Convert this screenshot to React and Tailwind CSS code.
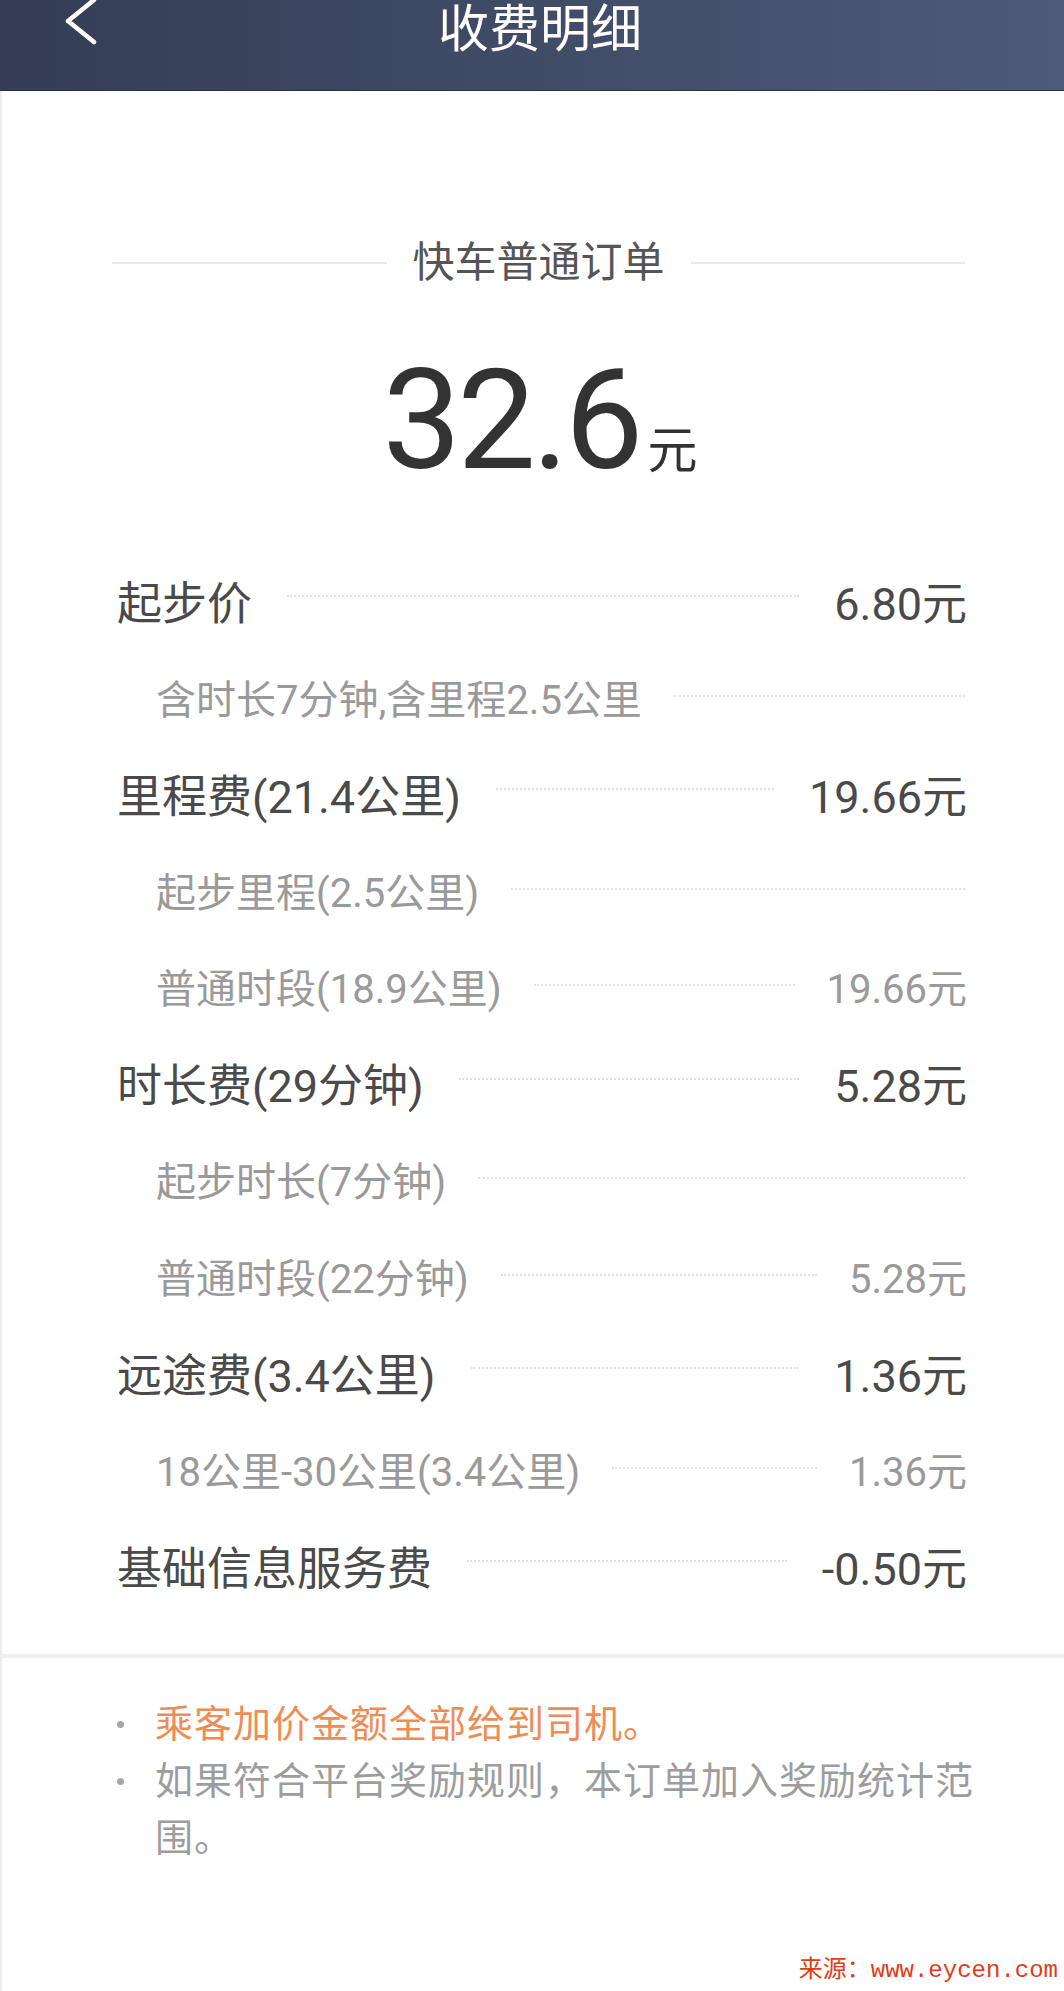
import React from "react";

const rows = [
  { main: true, label: "起步价", value: "6.80元" },
  { main: false, label: "含时长7分钟,含里程2.5公里" },
  { main: true, label: "里程费(21.4公里)", value: "19.66元" },
  { main: false, label: "起步里程(2.5公里)" },
  { main: false, label: "普通时段(18.9公里)", value: "19.66元" },
  { main: true, label: "时长费(29分钟)", value: "5.28元" },
  { main: false, label: "起步时长(7分钟)" },
  { main: false, label: "普通时段(22分钟)", value: "5.28元" },
  { main: true, label: "远途费(3.4公里)", value: "1.36元" },
  { main: false, label: "18公里-30公里(3.4公里)", value: "1.36元" },
  { main: true, label: "基础信息服务费", value: "-0.50元" },
];

const FeeRow = ({ main, label, value }) => {
  if (main) {
    return (
      <div className="flex items-center h-[96.5px] pl-[115px] pr-[97px] text-[45px] leading-none text-[#4a4a4a]">
        <span className="whitespace-nowrap">{label}</span>
        <div className="flex-1 mx-[35px] -translate-y-[8px] border-t-2 border-dotted border-[#e2e2e2]" />
        <span className="whitespace-nowrap">{value}</span>
      </div>
    );
  }
  return (
    <div className="flex items-center h-[96.5px] pl-[154px] pr-[97px] text-[40px] leading-none text-[#9a9a9a]">
      <span className="whitespace-nowrap">{label}</span>
      <div
        className={`flex-1 -translate-y-[5px] border-t-2 border-dotted border-[#e2e2e2] ${
          value ? "mx-[32px]" : "ml-[32px] mr-[2px]"
        }`}
      />
      {value && <span className="whitespace-nowrap">{value}</span>}
    </div>
  );
};

const Note = ({ children, orange }) => (
  <div className="flex items-start">
    <div className="h-[57px] flex items-center">
      <div className="w-[7px] h-[7px] rounded-full bg-[#a5a5a5]" />
    </div>
    <p
      className={`ml-[31px] w-[835px] text-[38px] leading-[57px] tracking-[1px] ${
        orange ? "text-[#ee8c55]" : "text-[#9d9d9d]"
      }`}
    >
      {children}
    </p>
  </div>
);

export default function App() {
  return (
    <div
      className="relative w-[1064px] h-[1991px] overflow-hidden bg-white"
      style={{ fontFamily: 'Roboto, "Noto Sans CJK SC", sans-serif' }}
    >
      {/* Header */}
      <div className="flex items-start h-[91px] bg-gradient-to-r from-[#343d54] to-[#4d5a79] border-b border-[#2c3345]">
        <div className="w-[96px] pl-[63px]">
          <svg width="34" height="46" viewBox="0 0 34 46" className="-mt-[1px]">
            <path d="M31 1 L5 22 L31 43" fill="none" stroke="#ffffff" strokeWidth="4.5" strokeLinecap="round" strokeLinejoin="round" />
          </svg>
        </div>
        <div className="flex-1 pr-[80px] text-center text-white text-[51px] leading-none" style={{ fontFamily: '"Noto Sans CJK SC", sans-serif' }}>
          收费明细
        </div>
      </div>

      <div className="flow-root border-l-2 border-[#eeeeee] h-[1900px]">
        {/* Order type */}
        <div className="flex items-center mt-[151px] pl-[110px] pr-[99px]">
          <div className="flex-1 h-[2px] bg-[#e8e8e8]" />
          <span className="mx-[26px] text-[42px] leading-none text-[#555555]">快车普通订单</span>
          <div className="flex-1 h-[2px] bg-[#e8e8e8]" />
        </div>

        {/* Amount */}
        <div className="flex items-baseline justify-center mt-[66px] pl-[14px] leading-none text-[#333333]">
          <span className="text-[140px] tracking-[-4px]">32.6</span>
          <span className="ml-[8px] text-[50px]">元</span>
        </div>

        {/* Fee rows */}
        <div className="mt-[66px]">
          {rows.map((r, i) => (
            <FeeRow key={i} {...r} />
          ))}
        </div>

        <div className="mt-[36px] h-[4px] bg-[#efefef]" />

        {/* Notes */}
        <div className="mt-[38px] pl-[115px]">
          <Note orange>乘客加价金额全部给到司机。</Note>
          <Note>如果符合平台奖励规则，本订单加入奖励统计范围。</Note>
        </div>
      </div>

      <div
        className="absolute right-[6px] bottom-[8px] text-[24px] leading-none text-[#e23b17]"
        style={{ fontFamily: '"Liberation Mono", "Noto Sans CJK SC", monospace' }}
      >
        来源：www.eycen.com
      </div>
    </div>
  );
}
